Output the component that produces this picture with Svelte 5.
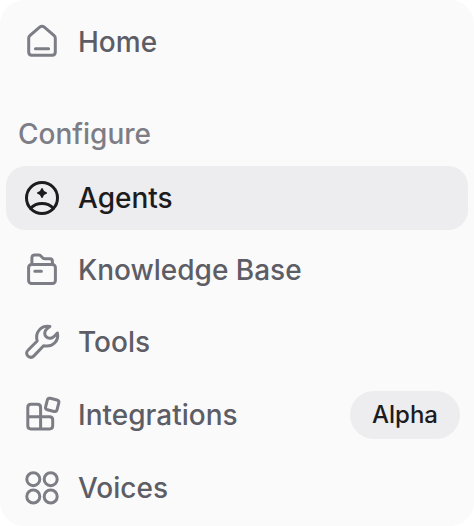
<script>
  const configure = [
    { name: 'Agents', icon: 'agents', active: true },
    { name: 'Knowledge Base', icon: 'knowledge' },
    { name: 'Tools', icon: 'tools' },
    { name: 'Integrations', icon: 'integrations', badge: 'Alpha' },
    { name: 'Voices', icon: 'voices' }
  ];
</script>

{#snippet glyph(icon)}
  <svg class="icon" viewBox="0 0 36 36" aria-hidden="true">
    {#if icon === 'home'}
      <path d="M4.7 14.3c0-1.200.5-2.100 1.400-2.900L15.700 3.200c1.400-1.200 3.200-1.200 4.600 0l9.600 8.200c.9.8 1.400 1.700 1.400 2.900V28c0 1.900-1.200 3.200-3.100 3.200H7.800c-1.900 0-3.100-1.300-3.100-3.200zM11.400 24.700h13.200" />
    {:else if icon === 'agents'}
      <circle cx="18" cy="18" r="15.500" />
      <path d="M6.600 28.300C9.600 25 13.400 23.400 18 23.400s8.400 1.600 11.400 4.900" />
      <path class="solid" d="M18 8.800c.7 2.900 1.500 3.600 4.300 4.200-2.800.6-3.600 1.300-4.300 4.200-.7-2.900-1.500-3.600-4.300-4.200 2.800-.6 3.600-1.300 4.300-4.200z" />
    {:else if icon === 'knowledge'}
      <rect x="4.600" y="12.400" width="26.800" height="19.200" rx="3" />
      <path d="M7.900 12.400V5.700c0-1.800.9-2.700 2.700-2.700h4.200c2.800 0 3 3.800 6 3.800h5c1.800 0 2.600.9 2.600 2.600v3M10.800 19.200h6.600" />
    {:else if icon === 'tools'}
      <path d="M25.900 2.500C23.300 4.200 20.700 6.600 20.700 9.300c0 2.900 2.500 5.200 5.300 5 2.800-.2 5.300-2.700 7.400-5.300 1.800 7.600-4.800 14.800-13.800 12.700L10.200 31.600c-2 2.100-4.300 2.200-6.200.5-1.900-1.900-1.900-4.200.2-6.100l9-9C10.700 8.700 16.700 1.100 25.900 2.500z" />
    {:else if icon === 'integrations'}
      <path d="M16.600 19.700V10.400c0-1.900-1.200-3.100-3.100-3.100H6.900c-1.900 0-3.100 1.200-3.100 3.100v18.400c0 1.900 1.200 3.100 3.100 3.100h18.700c1.900 0 3.100-1.200 3.100-3.100v-6c0-1.900-1.200-3.100-3.100-3.100H3.800M16.600 19.700v12.200" />
      <rect x="22.300" y="2" width="11.800" height="11.800" rx="2.400" transform="rotate(14 28.200 7.900)" />
    {:else}
      <circle cx="9.300" cy="9.200" r="6.500" />
      <circle cx="26.700" cy="9.200" r="6.500" />
      <circle cx="9.300" cy="26.500" r="6.500" />
      <circle cx="26.700" cy="26.500" r="6.500" />
    {/if}
  </svg>
{/snippet}

<nav class="sidebar">
  <div class="item">
    {@render glyph('home')}
    <span class="label">Home</span>
  </div>
  <div class="heading">Configure</div>
  <div class="list">
    {#each configure as entry}
      <div class="item" class:active={entry.active}>
        {@render glyph(entry.icon)}
        <span class="label">{entry.name}</span>
        {#if entry.badge}<span class="badge">{entry.badge}</span>{/if}
      </div>
    {/each}
  </div>
</nav>

<style>
  :global(body) {
    background: #fff;
  }
  .sidebar {
    box-sizing: border-box;
    width: 474px;
    height: 526px;
    padding: 10px 6px 0;
    border-radius: 24px;
    background: #fafafa;
    font: 500 28px/32px Inter, sans-serif;
    overflow: hidden;
  }
  .item {
    box-sizing: border-box;
    display: flex;
    align-items: center;
    height: 64px;
    padding: 0 8px 0 18px;
    border-radius: 20px;
    color: #5d5d66;
    white-space: nowrap;
  }
  .icon {
    flex: none;
    width: 36px;
    height: 36px;
    margin-right: 18px;
    overflow: visible;
    fill: none;
    stroke: #7d7d86;
    stroke-width: 3;
    stroke-linecap: round;
    stroke-linejoin: round;
  }
  .heading {
    margin: 44px 0 16px 12px;
    color: #7d7d86;
  }
  .list {
    display: flex;
    flex-direction: column;
    gap: 8px;
  }
  .list .item:nth-child(n + 4) {
    margin-top: 1px;
  }
  .active {
    background: #ededef;
    color: #1c1c1e;
  }
  .active .icon {
    stroke: #1c1c1e;
  }
  .icon .solid {
    fill: #1c1c1e;
    stroke-width: 1.5;
  }
  .badge {
    display: flex;
    align-items: center;
    justify-content: center;
    width: 110px;
    height: 48px;
    margin-left: auto;
    border-radius: 24px;
    background: #ededef;
    color: #1c1c1e;
    font-size: 24px;
  }
</style>
